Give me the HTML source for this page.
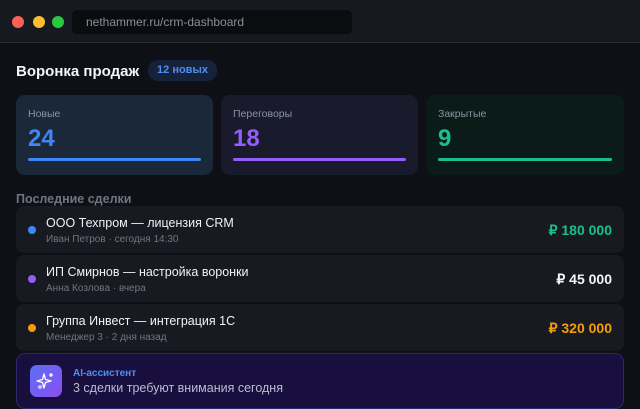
<!DOCTYPE html>
<html><head><meta charset="utf-8"><style>
*{margin:0;padding:0;box-sizing:border-box}
body{width:640px;height:409px;overflow:hidden;background:#0e1016;font-family:"Liberation Sans","Noto Sans CJK SC",sans-serif;position:relative;color:#fff}
.top{position:absolute;left:0;top:0;width:640px;height:43px;background:#16191f;border-bottom:1px solid #2a2e36}
.dot{position:absolute;top:16px;width:12px;height:12px;border-radius:50%}
.url{position:absolute;left:72px;top:10px;width:280px;height:24px;background:#0b0c10;border-radius:5px;color:#8a8f99;font-size:12px;line-height:24px;padding-left:14px}
.abs{position:absolute}
.card{position:absolute;top:95px;height:80px;border-radius:9px}
.card .l{position:absolute;left:12px;top:13px;font-size:10.5px;color:#8a93a3}
.card .n{position:absolute;left:12px;top:30px;font-size:24px;font-weight:bold}
.card .b{position:absolute;left:12px;right:12px;top:63px;height:3px;border-radius:2px}
.row{position:absolute;left:16px;width:608px;height:47px;background:#171a21;border-radius:8px}
.row .d{position:absolute;left:12px;top:20px;width:8px;height:8px;border-radius:50%}
.row .t{position:absolute;left:30px;top:10px;font-size:12.5px;color:#f1f2f4}
.row .s{position:absolute;left:30px;top:28px;font-size:10px;color:#6e7582}
.row .a{position:absolute;right:12px;top:16px;font-size:14px;font-weight:bold}
</style></head><body>
<div class="top">
<div class="dot" style="left:12px;background:#fe5f57"></div>
<div class="dot" style="left:33px;background:#febc2e"></div>
<div class="dot" style="left:52px;background:#28c840"></div>
<div class="url">nethammer.ru/crm-dashboard</div>
</div>
<div class="abs" style="left:16px;top:63px;font-size:15px;font-weight:bold;color:#f4f5f7">Воронка продаж</div>
<div class="abs" style="left:148px;top:60px;width:69px;height:21px;border-radius:10px;background:#15223a;color:#4f8ff0;font-size:11px;font-weight:bold;line-height:21px;text-align:center">12 новых</div>

<div class="card" style="left:16px;width:197px;background:#1b2839"><div class="l">Новые</div><div class="n" style="color:#3d87f5">24</div><div class="b" style="background:#3d87f5"></div></div>
<div class="card" style="left:221px;width:197px;background:#1a1a2d"><div class="l">Переговоры</div><div class="n" style="color:#935ff5">18</div><div class="b" style="background:#935ff5"></div></div>
<div class="card" style="left:426px;width:198px;background:#0b1c18"><div class="l">Закрытые</div><div class="n" style="color:#19c089">9</div><div class="b" style="background:#19c089"></div></div>

<div class="abs" style="left:16px;top:192px;font-size:12.5px;font-weight:bold;color:#6e7582">Последние сделки</div>

<div class="row" style="top:206px"><div class="d" style="background:#3d87f5"></div><div class="t">ООО Техпром — лицензия CRM</div><div class="s">Иван Петров · сегодня 14:30</div><div class="a" style="color:#19c089">₽ 180 000</div></div>
<div class="row" style="top:255px"><div class="d" style="background:#935ff5"></div><div class="t">ИП Смирнов — настройка воронки</div><div class="s">Анна Козлова · вчера</div><div class="a" style="color:#f4f5f7">₽ 45 000</div></div>
<div class="row" style="top:304px"><div class="d" style="background:#f59e0b"></div><div class="t">Группа Инвест — интеграция 1С</div><div class="s">Менеджер 3 · 2 дня назад</div><div class="a" style="color:#f59e0b">₽ 320 000</div></div>

<div class="abs" style="left:16px;top:353px;width:608px;height:56px;background:#190f3f;border:1px solid #2c2a6a;border-radius:9px">
<div class="abs" style="left:13px;top:11px;width:32px;height:32px;border-radius:7px;background:linear-gradient(135deg,#5b6ff5,#8a4ef0)">
<svg width="32" height="32" viewBox="0 0 32 32"><path d="M14 9 L15.5 14.5 L21 16 L15.5 17.5 L14 23 L12.5 17.5 L7 16 L12.5 14.5 Z" fill="none" stroke="#fff" stroke-width="1.4" stroke-linejoin="round"/><path d="M21 8v4M19 10h4" stroke="#fff" stroke-width="1.3"/><circle cx="10" cy="22" r="1.3" fill="none" stroke="#fff" stroke-width="1"/></svg>
</div>
<div class="abs" style="left:56px;top:14px;font-size:10px;font-weight:bold;color:#4f8ff0">AI-ассистент</div>
<div class="abs" style="left:56px;top:27px;font-size:12.5px;color:#b9bdd0">3 сделки требуют внимания сегодня</div>
</div>
</body></html>
